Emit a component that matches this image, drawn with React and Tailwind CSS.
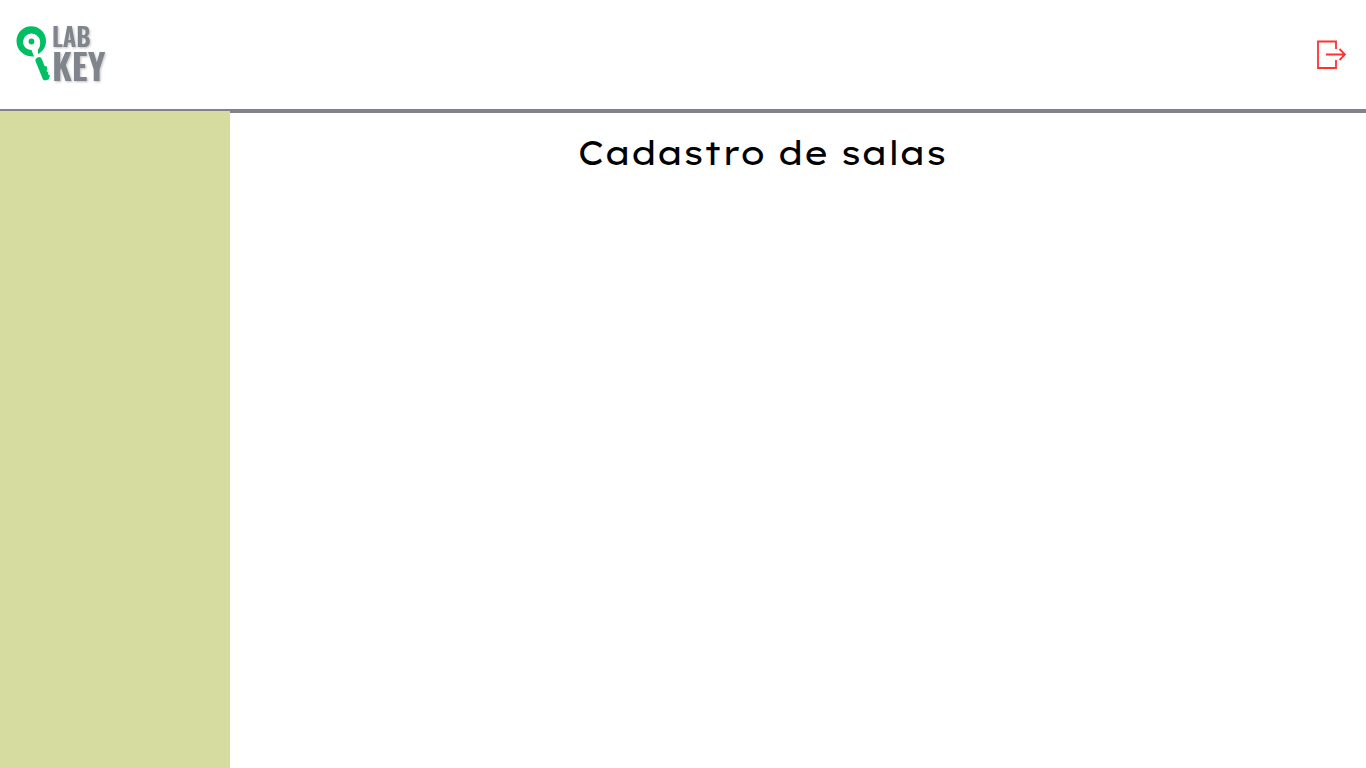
function Logo() {
  return (
    <svg width="96" height="60" viewBox="0 0 96 60" role="img" aria-label="Lab Key" className="overflow-visible">
      <g fill="#00bf63">
        <path d="M18 31.500C9 32 0.500 26 0.500 16A14.700 14.700 0 0 1 30 16C30 22 27 26.500 22 29L22 24.500C24 22.500 24.500 19.500 24 15.500A8.600 8.600 0 0 0 7 16.500C7 21.500 10.500 24.500 15.500 25Z" />
        <circle cx="15.500" cy="16.500" r="2.900" />
        <path d="M26 42L30.500 41L31.500 44.500L29.500 46.500L32.500 47L31.500 49L34 50.500L32.500 54.500L28 55Z" />
      </g>
      <path d="M22.800 35.500L29.500 52" stroke="#00bf63" strokeWidth="6.600" strokeLinecap="round" />
      <g fill="#80858d" className="font-['Oswald','Bebas_Neue','Liberation_Sans',sans-serif] font-semibold drop-shadow-[1px_1px_1px_rgba(0,0,0,0.25)]">
        <text x="36" y="22" fontSize="25">LAB</text>
        <text x="36" y="56" fontSize="36">KEY</text>
      </g>
    </svg>
  );
}

function LogoutIcon() {
  return (
    <svg width="30" height="30" viewBox="0 0 30 30" fill="none" stroke="#ff3131" strokeWidth="1.8" aria-hidden="true">
      <path d="M20 9V1.500H2V28H20V20" />
      <path d="M10 14.500H29M23.500 9L29 14.500L23.500 20" />
    </svg>
  );
}

export default function App() {
  return (
    <div className="flex min-h-screen flex-col bg-white font-['Lexend_Exa','Lexend','DejaVu_Sans',sans-serif] text-black">
      <header className="flex h-[113px] items-center justify-between border-b-4 border-[#80828c] pr-5 pl-4">
        <a href="#inicio" aria-label="Lab Key">
          <Logo />
        </a>
        <button type="button" aria-label="Sair" className="cursor-pointer">
          <LogoutIcon />
        </button>
      </header>
      <div className="flex flex-1">
        <aside className="relative -mt-0.5 w-[230px] shrink-0 bg-[#d6dca0]" />
        <main className="flex-1 px-4 pt-4">
          <h1 className="pr-18 text-center text-[34px] leading-12 font-normal">Cadastro de salas</h1>
        </main>
      </div>
    </div>
  );
}
